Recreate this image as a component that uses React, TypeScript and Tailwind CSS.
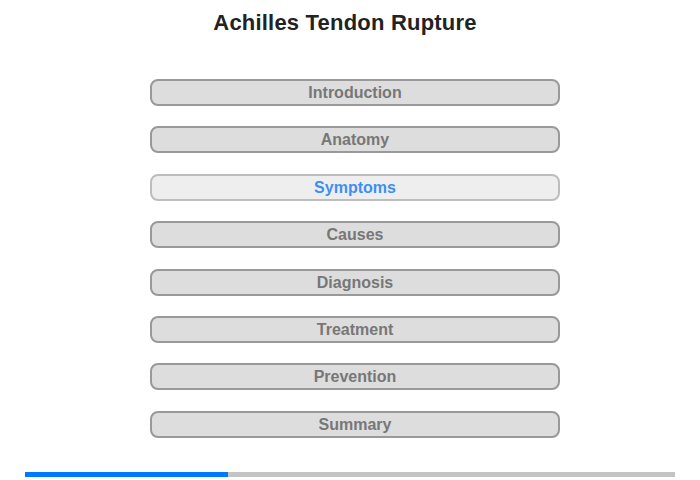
import React from 'react';

const sections = ['Introduction', 'Anatomy', 'Symptoms', 'Causes', 'Diagnosis', 'Treatment', 'Prevention', 'Summary'];
const active = 'Symptoms';

export default function App() {
    return (
        <div className="w-[700px] h-[480px] bg-white relative overflow-hidden" style={{ fontFamily: '"Liberation Sans", Arial, sans-serif' }}>
            <h1 className="pt-[10px] pr-[10px] text-center text-[22px] leading-[26px] tracking-[0.2px] font-bold text-[#222]">
                Achilles Tendon Rupture
            </h1>

            <div className="mt-[43px] ml-[150px] w-[410px] flex flex-col gap-[20.4px]">
                {sections.map((s) => {
                    const isActive = s === active;
                    return (
                        <div
                            key={s}
                            className={
                                isActive
                                    ? 'h-[27px] pt-px rounded-[8px] border-2 border-[#bdbdbd] bg-[#eeeeee] flex items-center justify-center text-[16px] font-bold text-[#3d8ff5]'
                                    : 'h-[27px] pt-px rounded-[8px] border-2 border-[#999999] bg-[#dddddd] flex items-center justify-center text-[16px] font-bold text-[#777777]'
                            }
                        >
                            {s}
                        </div>
                    );
                })}
            </div>

            {/* progress */}
            <div className="absolute left-[25px] top-[472px] w-[650px] h-[5px] bg-[#c4c4c4]">
                <div className="h-full w-[203px] bg-[#0077ff]" />
            </div>
        </div>
    );
}
